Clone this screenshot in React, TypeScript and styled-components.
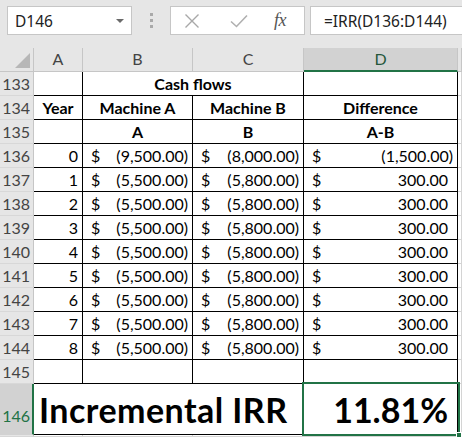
import React from "react";
import styled, { createGlobalStyle, css } from "styled-components";

const GREEN = "#217346";
const HEAD_BG = "#e6e6e6";
const HEAD_SEL = "#d2d2d2";
const HEAD_LINE = "#c6c6c6";

const GlobalStyle = createGlobalStyle`
  html, body { margin: 0; padding: 0; background: #fff; overflow: hidden; }
  body { width: 462px; height: 437px; }
`;

const Page = styled.div`
  width: 462px;
  height: 437px;
  display: flex;
  flex-direction: column;
  overflow: hidden;
  font-family: Lato, "Liberation Sans", sans-serif;
`;

const Toolbar = styled.div`
  height: 48px;
  flex: none;
  background: ${HEAD_BG};
  display: flex;
  align-items: flex-start;
  padding: 6px 0 0 7px;
  box-sizing: border-box;
  font-family: "Noto Sans", "Open Sans", sans-serif;
  font-size: 15.5px;
  color: #222;
`;

const NameBox = styled.div`
  width: 125px;
  height: 29px;
  box-sizing: border-box;
  background: #fff;
  border: 1px solid ${HEAD_LINE};
  display: flex;
  align-items: center;
  justify-content: space-between;
  padding: 0 7px 0 7px;
`;

const Caret = styled.span`
  width: 0;
  height: 0;
  border-left: 4px solid transparent;
  border-right: 4px solid transparent;
  border-top: 4px solid #6a6a6a;
  margin-top: 1px;
`;

const Grip = styled.div`
  width: 38px;
  height: 29px;
  display: flex;
  flex-direction: column;
  align-items: center;
  justify-content: center;
  gap: 3px;
  span {
    width: 3px;
    height: 3px;
    background: #a9a9a9;
  }
`;

const FxBox = styled.div`
  width: 135px;
  height: 29px;
  box-sizing: border-box;
  background: #fff;
  border: 1px solid ${HEAD_LINE};
  display: flex;
  align-items: center;
  padding-left: 13px;
`;

const IconSlot = styled.div<{ $w: number }>`
  width: ${(p) => p.$w}px;
  display: flex;
  align-items: center;
`;

const Fx = styled.span`
  font-family: "Liberation Serif", "DejaVu Serif", serif;
  font-style: italic;
  font-size: 18px;
  color: #555;
  letter-spacing: -0.5px;
`;

const FormulaBox = styled.div`
  flex: 1;
  height: 29px;
  margin-left: 5px;
  box-sizing: border-box;
  background: #fff;
  border: 1px solid ${HEAD_LINE};
  border-right: none;
  display: flex;
  align-items: center;
  padding-left: 13px;
`;

const Sheet = styled.div`
  flex: 1;
  display: grid;
  grid-template-columns: 34px 49px 110px 111px 154px 1fr;
  grid-template-rows: 24px repeat(13, 24px) 51px 1fr;
  font-size: 16px;
  line-height: 20px;
  color: #000;
`;

const Corner = styled.div`
  background: ${HEAD_BG};
  border-right: 1px solid ${HEAD_LINE};
  border-bottom: 1px solid ${HEAD_LINE};
  display: flex;
  align-items: flex-end;
  justify-content: flex-end;
  padding: 0 3px 3px 0;
  &::after {
    content: "";
    width: 0;
    height: 0;
    border-left: 15px solid transparent;
    border-bottom: 15px solid #b7b7b7;
  }
`;

const ColHead = styled.div<{ $sel?: boolean }>`
  background: ${(p) => (p.$sel ? HEAD_SEL : HEAD_BG)};
  border-right: 1px solid ${HEAD_LINE};
  border-bottom: ${(p) => (p.$sel ? `2px solid ${GREEN}` : `1px solid ${HEAD_LINE}`)};
  color: ${(p) => (p.$sel ? "#25573a" : "#444")};
  display: flex;
  align-items: flex-end;
  justify-content: center;
  padding-bottom: ${(p) => (p.$sel ? 1 : 2)}px;
`;

const RowHead = styled.div<{ $sel?: boolean }>`
  background: ${(p) => (p.$sel ? HEAD_SEL : HEAD_BG)};
  border-right: ${(p) => (p.$sel ? `2px solid ${GREEN}` : `1px solid ${HEAD_LINE}`)};
  border-bottom: 1px solid ${(p) => (p.$sel ? HEAD_SEL : "#d8d8d8")};
  color: ${(p) => (p.$sel ? GREEN : "#444")};
  display: flex;
  align-items: flex-end;
  justify-content: flex-end;
  padding: 0 ${(p) => (p.$sel ? 2 : 3)}px ${(p) => (p.$sel ? 8 : 1)}px 0;
`;

type Align = "left" | "center" | "right";

const Cell = styled.div<{ $align?: Align; $bold?: boolean; $span?: number; $big?: boolean }>`
  border-right: 1px solid #000;
  border-bottom: 1px solid #000;
  display: flex;
  align-items: flex-end;
  justify-content: ${(p) =>
    p.$align === "center" ? "center" : p.$align === "right" ? "flex-end" : "flex-start"};
  padding: 0 4px 1px 4px;
  font-weight: ${(p) => (p.$bold ? 700 : 400)};
  white-space: nowrap;
  overflow: visible;
  position: relative;
  ${(p) => p.$span && css`grid-column: span ${p.$span};`}
  ${(p) =>
    p.$big &&
    css`
      font-size: 34px;
      line-height: 40px;
      padding: 0 9px 4px 5px;
    `}
`;

const BigLabel = styled(Cell)`
  letter-spacing: 0.45px;
`;

const Money = styled(Cell)`
  justify-content: space-between;
  padding-left: 8px;
  padding-right: 4px;
`;

const Amount = styled.span<{ $pos: boolean }>`
  padding-right: ${(p) => (p.$pos ? 5 : 0)}px;
`;

const Selected = styled(Cell)`
  &::after {
    content: "";
    position: absolute;
    left: -2px;
    top: -2px;
    right: -3px;
    bottom: -2px;
    border: 2px solid ${GREEN};
    pointer-events: none;
  }
  &::before {
    content: "";
    position: absolute;
    right: -5px;
    bottom: -4px;
    width: 6px;
    height: 6px;
    background: ${GREEN};
    border: 1px solid #fff;
    box-sizing: border-box;
    z-index: 2;
  }
`;

const Blank = styled.div`
  border-right: 1px solid #d4d4d4;
  border-bottom: 1px solid #d4d4d4;
`;

const fmt = (v: number) => {
  const s = Math.abs(v).toLocaleString("en-US", { minimumFractionDigits: 2, maximumFractionDigits: 2 });
  return v < 0 ? `(${s})` : s;
};

const MoneyCell = ({ v }: { v: number }) => (
  <Money>
    <span>$</span>
    <Amount $pos={v >= 0}>{fmt(v)}</Amount>
  </Money>
);

const flows = [
  { y: 0, a: -9500, b: -8000 },
  ...Array.from({ length: 8 }, (_, i) => ({ y: i + 1, a: -5500, b: -5800 })),
];

export default function App() {
  return (
    <>
      <GlobalStyle />
      <Page>
        <Toolbar>
          <NameBox>
            <span>D146</span>
            <Caret />
          </NameBox>
          <Grip>
            <span />
            <span />
            <span />
          </Grip>
          <FxBox>
            <IconSlot $w={46}>
              <svg width="16" height="16" viewBox="0 0 16 16">
                <path d="M1.5 1.5 L14.5 14.5 M14.5 1.5 L1.5 14.5" stroke="#a8a8a8" strokeWidth="1.4" fill="none" />
              </svg>
            </IconSlot>
            <IconSlot $w={44}>
              <svg width="18" height="14" viewBox="0 0 18 14">
                <path d="M1 7.5 L6.5 12.5 L17 1.5" stroke="#b0b0b0" strokeWidth="1.6" fill="none" />
              </svg>
            </IconSlot>
            <Fx>fx</Fx>
          </FxBox>
          <FormulaBox>=IRR(D136:D144)</FormulaBox>
        </Toolbar>
        <Sheet>
          <Corner />
          <ColHead>A</ColHead>
          <ColHead>B</ColHead>
          <ColHead>C</ColHead>
          <ColHead $sel>D</ColHead>
          <ColHead />

          <RowHead>133</RowHead>
          <Cell />
          <Cell $span={2} $align="center" $bold>
            Cash flows
          </Cell>
          <Cell />
          <Blank />

          <RowHead>134</RowHead>
          <Cell $align="center" $bold>
            Year
          </Cell>
          <Cell $align="center" $bold>
            Machine A
          </Cell>
          <Cell $align="center" $bold>
            Machine B
          </Cell>
          <Cell $align="center" $bold>
            Difference
          </Cell>
          <Blank />

          <RowHead>135</RowHead>
          <Cell />
          <Cell $align="center" $bold>
            A
          </Cell>
          <Cell $align="center" $bold>
            B
          </Cell>
          <Cell $align="center" $bold>
            A-B
          </Cell>
          <Blank />

          {flows.map((f) => (
            <React.Fragment key={f.y}>
              <RowHead>{136 + f.y}</RowHead>
              <Cell $align="right">{f.y}</Cell>
              <MoneyCell v={f.a} />
              <MoneyCell v={f.b} />
              <MoneyCell v={f.a - f.b} />
              <Blank />
            </React.Fragment>
          ))}

          <RowHead>145</RowHead>
          <Cell />
          <Cell />
          <Cell />
          <Cell />
          <Blank />

          <RowHead $sel>146</RowHead>
          <BigLabel $span={3} $bold $big>
            Incremental IRR
          </BigLabel>
          <Selected $align="right" $bold $big>
            11.81%
          </Selected>
          <Blank />

          <RowHead />
          <Blank />
          <Blank />
          <Blank />
          <Blank />
          <Blank />
        </Sheet>
      </Page>
    </>
  );
}
